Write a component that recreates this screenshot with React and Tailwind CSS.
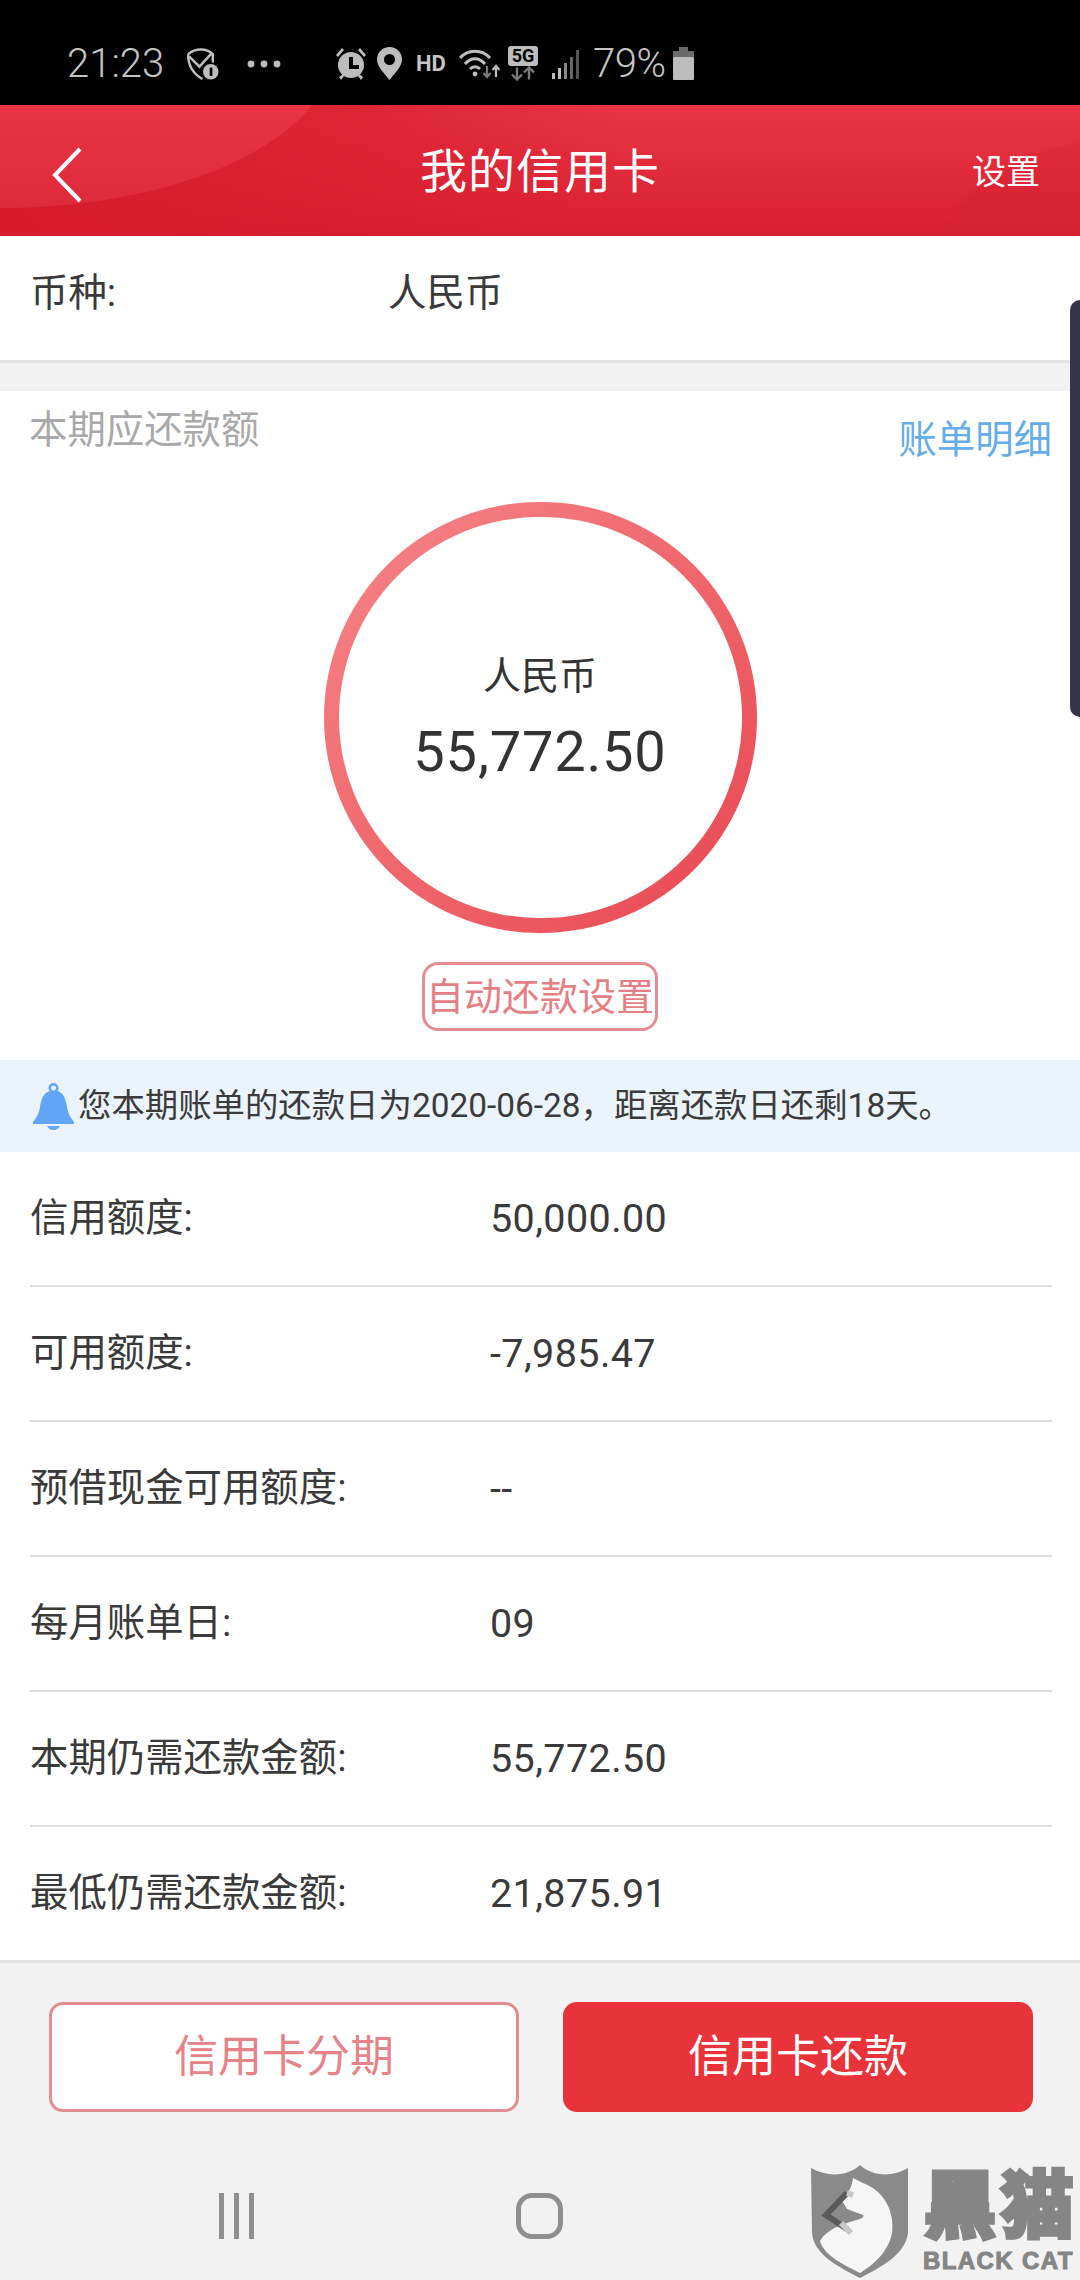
const FONT = "font-['Roboto','Noto_Sans_CJK_SC',sans-serif]";

function Row({ label, value, h, last }) {
  return (
    <div className={`${h} flex items-center ${last ? "" : "border-b-2 border-[#dedede]"}`}>
      <span className="w-[460px] text-[38.4px] text-[#3a3a3a] leading-none">{label}</span>
      <span className="text-[39.5px] text-[#3a3a3a] leading-none tracking-[0.4px]">{value}</span>
    </div>
  );
}

function StatusBar() {
  const c = "#bdbdbd";
  return (
    <div className="h-[105px] bg-black flex items-center pl-[67px] pt-[22px] text-[#c4c4c4] font-light text-[40px] leading-none">
      <span className="w-[96px]">21:23</span>
      <svg className="ml-[23px]" width="33" height="33" viewBox="0 0 32 32" fill="none" stroke={c} strokeWidth="2.4">
        <path d="M2 7 C9 1 20 1 26 7 L26 15 M2 7 C2 17 7 26 16 31 M3 9 L13 19 L25 6" />
        <circle cx="24" cy="24" r="7.5" fill={c} stroke="none" />
        <rect x="23" y="20" width="2.6" height="8" fill="#000" stroke="none" />
      </svg>
      <svg className="ml-[28px]" width="34" height="8" viewBox="0 0 34 8" fill={c}>
        <circle cx="4" cy="4" r="3.4" /><circle cx="17" cy="4" r="3.4" /><circle cx="30" cy="4" r="3.4" />
      </svg>
      <svg className="ml-[53px]" width="34" height="34" viewBox="0 0 34 34" fill={c}>
        <circle cx="17" cy="18" r="13" />
        <path d="M2 8 L8 1 L10 3 L4 10 Z M32 8 L26 1 L24 3 L30 10 Z M5 30 L9 27 L10 29 L7 33 Z M29 30 L25 27 L24 29 L27 33 Z" />
        <path d="M15 10 H19 V18 H25 V22 H15 Z" fill="#000" />
      </svg>
      <svg className="ml-[9px]" width="25" height="33" viewBox="0 0 25 33">
        <path d="M12.5 0 C5.5 0 0 5.500 0 12.5 C0 20 8 27 12.5 33 C17 27 25 20 25 12.5 C25 5.500 19.500 0 12.5 0 Z" fill={c} />
        <circle cx="12.5" cy="12.5" r="5.500" fill="#000" />
      </svg>
      <span className="ml-[14px] w-[26px] text-[22px] font-bold leading-none font-['Roboto'] whitespace-nowrap">HD</span>
      <svg className="ml-[17px]" width="41" height="32" viewBox="0 0 41 32" fill="none" stroke={c} strokeWidth="3">
        <path d="M1 10 C9 1 23 1 31 10 M6 16 C12 9 20 9 26 16 M11 21 C14 18 18 18 21 21" />
        <circle cx="16" cy="26" r="2.4" fill={c} stroke="none" />
        <path d="M28 18 V29 M24.500 25 L28 29 L31.500 25" stroke="#7a7a7a" strokeWidth="2.2" />
        <path d="M37 29 V18 M33.500 22 L37 18 L40.500 22" strokeWidth="2.2" />
      </svg>
      <div className="ml-[8px] w-[30px] h-[35px] flex flex-col items-center">
        <span className="w-[30px] h-[20px] bg-[#bdbdbd] rounded-[3px] text-black text-[18px] font-bold leading-[20px] text-center font-['Roboto']">5G</span>
        <svg width="26" height="15" viewBox="0 0 26 14" fill="none" stroke="#7a7a7a" strokeWidth="2.4">
          <path d="M7 1 V13 M2 8 L7 13 L12 8" />
          <path d="M19 13 V1 M14 6 L19 1 L24 6" />
        </svg>
      </div>
      <svg className="ml-[14px]" width="28" height="30" viewBox="0 0 28 30">
        <rect x="0" y="24" width="3" height="6" fill={c} />
        <rect x="6" y="19" width="3" height="11" fill={c} />
        <rect x="12" y="14" width="3" height="16" fill="#8a8a8a" />
        <rect x="18" y="8" width="3" height="22" fill="#666" />
        <rect x="24" y="1" width="3" height="29" fill="#555" />
      </svg>
      <span className="ml-[13px] w-[69px] tracking-[-0.5px]">79%</span>
      <svg className="ml-[11px]" width="21" height="33" viewBox="0 0 21 33">
        <rect x="6" y="0" width="9" height="4" fill="#6a6a6a" />
        <rect x="0" y="4" width="21" height="6" fill="#6a6a6a" />
        <rect x="0" y="10" width="21" height="23" rx="1" fill={c} />
      </svg>
    </div>
  );
}

function Header() {
  return (
    <div className="relative h-[131px] bg-gradient-to-b from-[#e93444] to-[#d81f30] flex items-center justify-center overflow-hidden">
      <svg className="absolute left-0 top-0" width="1080" height="131" viewBox="0 0 1080 131" fill="none">
        <defs>
          <linearGradient id="hdrShade" x1="0" y1="0" x2="1" y2="0">
            <stop offset="0" stopColor="#d61c2b" />
            <stop offset="0.6" stopColor="#d61c2b" stopOpacity="0.55" />
            <stop offset="1" stopColor="#d61c2b" stopOpacity="0" />
          </linearGradient>
          <linearGradient id="hdrLight" x1="0" y1="0" x2="0" y2="1">
            <stop offset="0" stopColor="#e93444" />
            <stop offset="1" stopColor="#df2a3b" />
          </linearGradient>
        </defs>
        <path d="M0 103 C120 103 255 70 312 0 L620 0 L620 131 L0 131 Z" fill="url(#hdrShade)" />
        <path d="M0 103 C120 103 255 70 312 0 L0 0 Z" fill="url(#hdrLight)" />
        <path d="M945 120 C975 70 1030 45 1080 38 L1080 131 L940 131 Z" fill="#d52232" fillOpacity="0.3" />
      </svg>
      <svg className="absolute left-[50px] top-[42px]" width="34" height="56" viewBox="0 0 34 56" fill="none" stroke="#fff" strokeWidth="4">
        <path d="M30 2 L5 28 L30 54" />
      </svg>
      <span className="relative text-white text-[47px] leading-none tracking-[1px] pt-[2px]">我的信用卡</span>
      <span className="absolute left-[972px] top-[50px] text-white text-[34px] leading-none">设置</span>
    </div>
  );
}

function Watermark() {
  return (
    <div className="absolute left-[811px] top-[2165px] w-[269px] h-[115px] flex gap-[14px]">
      <svg width="98" height="114" viewBox="0 0 98 114">
        <path d="M0 3 C16 12 36 12 49 0 C62 12 82 12 97 3 L97 68 C94 90 70 102 49 113 C28 102 3 90 1 68 Z" fill="#8a8a8a" />
        <path d="M42 13 L52 18 C74 26 84 48 81 68 C77 88 62 100 49 108 C34 100 14 92 9 76 C16 64 30 60 42 56 C50 54 54 52 52 50 L36 44 L30 34 C34 30 40 28 42 13 Z" fill="#f6f6f6" />
        <path d="M36 28 L15 50 L36 64" fill="none" stroke="#5a5a5a" strokeWidth="6" />
        <path d="M30 58 L40 68" stroke="#c8c8c8" strokeWidth="6" />
        <path d="M36 28 L42 30" stroke="#c8c8c8" strokeWidth="6" />
      </svg>
      <div className="flex flex-col items-start pt-[5px]">
        <span className="text-[74px] leading-[74px] font-black text-[#858585] tracking-[3px] whitespace-nowrap [-webkit-text-stroke:3px_#858585]">黑猫</span>
        <span className="mt-[5px] text-[24px] leading-[24px] font-['Liberation_Sans'] font-bold text-[#858585] tracking-[1.4px] whitespace-nowrap [-webkit-text-stroke:1px_#858585]">BLACK CAT</span>
      </div>
    </div>
  );
}

export default function App() {
  return (
    <div className={`relative w-[1080px] h-[2280px] overflow-hidden bg-[#f2f2f3] flex flex-col ${FONT}`}>
      <StatusBar />
      <Header />

      <div className="h-[127px] bg-white border-b-[3px] border-[#e3e3e3] flex items-center pl-[30px] pb-[10px]">
        <span className="w-[358px] text-[38.4px] leading-none text-[#3a3a3a]">币种:</span>
        <span className="text-[38.4px] leading-none text-[#3a3a3a]">人民币</span>
      </div>

      <div className="h-[28px] shrink-0" />

      <div className="h-[669px] bg-white flex flex-col items-center">
        <div className="w-full flex justify-between items-start px-[28px] pt-[20px]">
          <span className="text-[38.4px] leading-none text-[#a9a9a9] pl-[1px]">本期应还款额</span>
          <span className="text-[38.4px] leading-none text-[#65ade8] mt-[10px]">账单明细</span>
        </div>
        <div className="mt-[43px] w-[433px] h-[431px] rounded-full bg-gradient-to-br from-[#f58589] to-[#e84450] p-[15px]">
          <div className="w-full h-full rounded-full bg-white flex flex-col items-center pt-[140px]">
            <span className="text-[38px] leading-none text-[#333]">人民币</span>
            <span className="mt-[29px] text-[56px] leading-none text-[#333] tracking-[0.8px]">55,772.50</span>
          </div>
        </div>
        <div className="mt-[29px] w-[236px] h-[69px] rounded-[16px] border-[3px] border-[#e28d8f] flex items-center justify-center whitespace-nowrap text-[38px] leading-none text-[#e57f84]">
          自动还款设置
        </div>
      </div>

      <div className="h-[92px] bg-[#ebf3fc] flex items-center pl-[33px]">
        <svg width="41" height="47" viewBox="0 0 41 47" fill="#60a5f6">
          <path fillRule="evenodd" d="M20.500 0 a5 5 0 0 1 5 5 c0 1.500 -0.500 2 -1 3 C31 10 33 17 34 24 C35 31 38 35 41 39 L41 41 L0 41 L0 39 C3 35 6 31 7 24 C8 17 10 10 17 8 C16 7 15.500 6.500 15.500 5 a5 5 0 0 1 5 -5 Z M20.500 2.500 a2.500 2.500 0 1 0 0.010 0 Z" />
          <path d="M14 43 H27 C25 46 23 47 20.500 47 C18 47 16 46 14 43 Z" />
        </svg>
        <span className="ml-[4px] text-[33.4px] leading-none text-[#3b3b3b] whitespace-nowrap">您本期账单的还款日为2020-06-28，距离还款日还剩18天。</span>
      </div>

      <div className="h-[808px] bg-white pl-[30px] pr-[28px] flex flex-col">
        <Row h="h-[135px]" label="信用额度:" value="50,000.00" />
        <Row h="h-[135px]" label="可用额度:" value="-7,985.47" />
        <Row h="h-[135px]" label="预借现金可用额度:" value="--" />
        <Row h="h-[135px]" label="每月账单日:" value="09" />
        <Row h="h-[135px]" label="本期仍需还款金额:" value="55,772.50" />
        <Row h="h-[133px]" label="最低仍需还款金额:" value="21,875.91" last />
      </div>

      <div className="border-t-[3px] border-[#e3e3e3] flex-1 flex flex-col">
        <div className="flex gap-[44px] pl-[49px] pt-[39px]">
          <div className="w-[470px] h-[110px] bg-white rounded-[14px] border-[3px] border-[#e28d8f] flex items-center justify-center text-[44px] leading-none text-[#e58388]">
            信用卡分期
          </div>
          <div className="w-[470px] h-[110px] bg-[#e8333a] rounded-[14px] flex items-center justify-center text-[44px] leading-none text-white">
            信用卡还款
          </div>
        </div>
        <div className="flex items-center pl-[219px] pt-[81px]">
          <div className="flex gap-[10px]">
            <div className="w-[5px] h-[46px] bg-[#8f8f8f]" />
            <div className="w-[5px] h-[46px] bg-[#8f8f8f]" />
            <div className="w-[5px] h-[46px] bg-[#8f8f8f]" />
          </div>
          <div className="ml-[262px] w-[47px] h-[46px] rounded-[16px] border-[5px] border-[#8f8f8f]" />
        </div>
      </div>

      <div className="absolute right-0 top-[300px] w-[10px] h-[417px] bg-[#35344a] rounded-l-[12px]" />
      <Watermark />
    </div>
  );
}
